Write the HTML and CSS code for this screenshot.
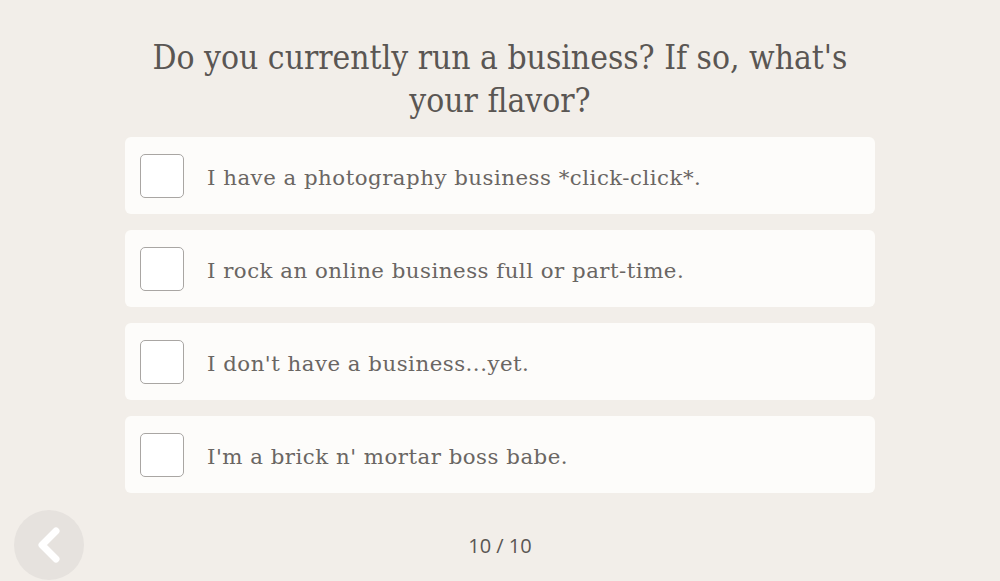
FILE: index.html
```html
<!DOCTYPE html>
<html>
<head>
<meta charset="utf-8">
<link rel="stylesheet" href="styles.css">
</head>
<body>
<main class="quiz">
  <h1 class="question">Do you currently run a business? If so, what's your flavor?</h1>
  <ul class="options">
    <li class="option"><span class="box"></span><span class="label">I have a photography business *click-click*.</span></li>
    <li class="option"><span class="box"></span><span class="label">I rock an online business full or part-time.</span></li>
    <li class="option"><span class="box"></span><span class="label">I don't have a business...yet.</span></li>
    <li class="option"><span class="box"></span><span class="label">I'm a brick n' mortar boss babe.</span></li>
  </ul>
  <footer class="footer">
    <button class="back" aria-label="Back">
      <svg width="30" height="40" viewBox="0 0 30 40"><path d="M22 6 L8 20 L22 34" fill="none" stroke="#fff" stroke-width="7" stroke-linecap="round" stroke-linejoin="round"/></svg>
    </button>
    <span class="progress">10 / 10</span>
  </footer>
</main>
</body>
</html>
```
FILE: styles.css
```css
html, body {
  margin: 0;
  padding: 0;
  background: #f2eee9;
  width: 1000px;
  height: 581px;
  overflow: hidden;
}
.quiz {
  display: flex;
  flex-direction: column;
  align-items: center;
  padding-top: 36px;
}
.question {
  margin: 0;
  width: 740px;
  text-align: center;
  font-family: "DejaVu Serif Condensed", "DejaVu Serif", serif;
  font-weight: normal;
  font-size: 33.3px;
  line-height: 43px;
  color: #5a5653;
}
.options {
  list-style: none;
  margin: 15px 0 0;
  padding: 0;
  display: flex;
  flex-direction: column;
  gap: 16px;
  width: 750px;
}
.option {
  display: flex;
  align-items: center;
  height: 77px;
  background: #fdfcfa;
  border-radius: 6px;
  padding-left: 15px;
  box-sizing: border-box;
}
.box {
  width: 44px;
  height: 44px;
  box-sizing: border-box;
  border: 1.5px solid #a9a6a3;
  border-radius: 5px;
  background: #fff;
  flex: none;
}
.label {
  margin-left: 23px;
  padding-top: 3px;
  font-family: "DejaVu Serif", serif;
  font-size: 21.3px;
  letter-spacing: 0.5px;
  color: #6a6663;
}
.footer {
  position: relative;
  width: 1000px;
  height: 70px;
  margin-top: 17px;
  display: flex;
  justify-content: center;
  align-items: center;
}
.progress {
  font-family: "Open Sans", sans-serif;
  font-size: 20px;
  color: #5a5653;
}
.back {
  position: absolute;
  left: 14px;
  top: 0;
  width: 70px;
  height: 70px;
  border-radius: 50%;
  border: none;
  background: #e6e2de;
  padding: 0;
  display: flex;
  align-items: center;
  justify-content: center;
}
```
